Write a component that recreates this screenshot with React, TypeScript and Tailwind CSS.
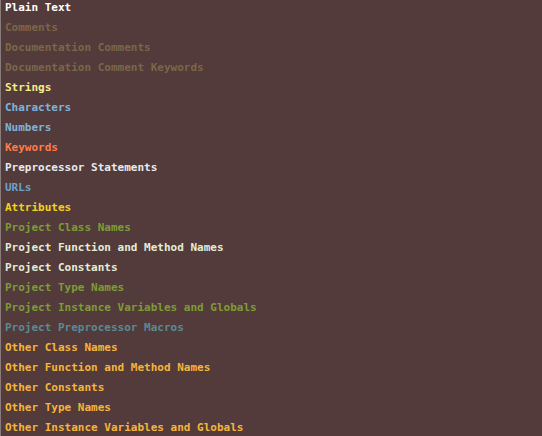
const rows: { label: string; color: string }[] = [
  { label: "Plain Text", color: "text-[#ffffff]" },
  { label: "Comments", color: "text-[#7d6549]" },
  { label: "Documentation Comments", color: "text-[#7d6549]" },
  { label: "Documentation Comment Keywords", color: "text-[#7d6549]" },
  { label: "Strings", color: "text-[#f6ec8a]" },
  { label: "Characters", color: "text-[#7fb2dc]" },
  { label: "Numbers", color: "text-[#7fb2dc]" },
  { label: "Keywords", color: "text-[#ff7b4b]" },
  { label: "Preprocessor Statements", color: "text-[#e6ebf0]" },
  { label: "URLs", color: "text-[#6ba2cc]" },
  { label: "Attributes", color: "text-[#f2d21e]" },
  { label: "Project Class Names", color: "text-[#7e9c36]" },
  { label: "Project Function and Method Names", color: "text-[#e4ecd8]" },
  { label: "Project Constants", color: "text-[#e4ecd8]" },
  { label: "Project Type Names", color: "text-[#7e9c36]" },
  { label: "Project Instance Variables and Globals", color: "text-[#7e9c36]" },
  { label: "Project Preprocessor Macros", color: "text-[#5a8a96]" },
  { label: "Other Class Names", color: "text-[#f5b53c]" },
  { label: "Other Function and Method Names", color: "text-[#f5b53c]" },
  { label: "Other Constants", color: "text-[#f5b53c]" },
  { label: "Other Type Names", color: "text-[#f5b53c]" },
  { label: "Other Instance Variables and Globals", color: "text-[#f5b53c]" },
];

export default function App() {
  return (
    <div className="h-[436px] w-[542px] overflow-hidden border-l border-[#8a7c7a] bg-[#523b3a] font-['DejaVu_Sans_Mono',monospace] text-[11px] font-bold">
      <ul className="-mt-[2px] pl-1">
        {rows.map((row) => (
          <li key={row.label} className={`h-5 leading-5 ${row.color}`}>
            {row.label}
          </li>
        ))}
      </ul>
    </div>
  );
}
